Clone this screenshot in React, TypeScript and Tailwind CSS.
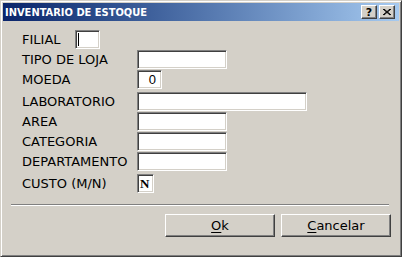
import React from "react";

const sunken =
  "bg-white border border-t-[#808080] border-l-[#808080] border-b-white border-r-white shadow-[inset_1px_1px_0_#404040,inset_-1px_-1px_0_#d4d0c8]";

function Field({ w, children, className = "" }: { w: string; children?: React.ReactNode; className?: string }) {
  return <div className={`${sunken} ${w} h-[19px] flex items-center ${className}`}>{children}</div>;
}

function Row({ label, mt, children }: { label: string; mt: string; children: React.ReactNode }) {
  return (
    <div className={`flex items-center h-[19px] ${mt}`}>
      <div className="w-[134px] shrink-0 pl-[19px] text-[13px] leading-none text-black">{label}</div>
      {children}
    </div>
  );
}

function Btn({ first, rest }: { first: string; rest: string }) {
  return (
    <div className="w-[110px] h-[23px] flex items-center justify-center bg-[#d4d0c8] border border-t-white border-l-white border-b-[#404040] border-r-[#404040] shadow-[inset_-1px_-1px_0_#808080] text-[13px] text-black">
      <span>
        <span className="underline underline-offset-2">{first}</span>
        {rest}
      </span>
    </div>
  );
}

export default function App() {
  return (
    <div
      className="w-[402px] h-[257px] bg-[#d4d0c8] flex flex-col p-[2px] border border-t-[#d4d0c8] border-l-[#d4d0c8] border-b-[#404040] border-r-[#404040] shadow-[inset_1px_1px_0_#ffffff,inset_-1px_-1px_0_#808080] overflow-hidden"
      style={{ fontFamily: '"DejaVu Sans", sans-serif' }}
    >
      <div className="h-[18px] shrink-0 flex items-center justify-between bg-gradient-to-r from-[#0a246a] to-[#a6caf0] pl-[2px] pr-[4px]">
        <span
          className="text-white text-[11px] font-bold leading-none"
          style={{ fontFamily: '"DejaVu Sans Condensed", "DejaVu Sans", sans-serif' }}
        >
          INVENTARIO DE ESTOQUE
        </span>
        <div className="flex gap-[2px]">
          <div className="w-[16px] h-[14px] bg-[#d4d0c8] border border-t-white border-l-white border-b-[#404040] border-r-[#404040] shadow-[inset_-1px_-1px_0_#808080] flex items-center justify-center text-[11px] font-bold leading-none text-black">?</div>
          <div className="w-[16px] h-[14px] bg-[#d4d0c8] border border-t-white border-l-white border-b-[#404040] border-r-[#404040] shadow-[inset_-1px_-1px_0_#808080] flex items-center justify-center">
            <svg width="8" height="7" viewBox="0 0 8 7">
              <path d="M0 0 L7 6 M1 0 L8 6 M7 0 L0 6 M8 0 L1 6" stroke="black" strokeWidth="1" />
            </svg>
          </div>
        </div>
      </div>

      <div className="flex flex-col">
        <div className="flex items-center h-[19px] mt-[9px]">
          <div className="pl-[19px] w-[72px] shrink-0 text-[13px] leading-none text-black">FILIAL</div>
          <Field w="w-[25px]">
            <div className="ml-[2px] w-px h-[13px] bg-black" />
          </Field>
        </div>
        <Row label="TIPO DE LOJA" mt="mt-[1px]">
          <Field w="w-[90px]" />
        </Row>
        <Row label="MOEDA" mt="mt-[1px]">
          <Field w="w-[25px]" className="justify-end pr-[5px]">
            <span className="text-[13px] leading-none" style={{ fontFamily: '"Liberation Sans", sans-serif' }}>0</span>
          </Field>
        </Row>
        <Row label="LABORATORIO" mt="mt-[3px]">
          <Field w="w-[170px]" />
        </Row>
        <Row label="AREA" mt="mt-[1px]">
          <Field w="w-[90px]" />
        </Row>
        <Row label="CATEGORIA" mt="mt-[1px]">
          <Field w="w-[90px]" />
        </Row>
        <Row label="DEPARTAMENTO" mt="mt-[1px]">
          <Field w="w-[90px]" />
        </Row>
        <Row label="CUSTO (M/N)" mt="mt-[3px]">
          <Field w="w-[17px]" className="pl-[2px]">
            <span className="text-[13px] font-bold leading-none" style={{ fontFamily: '"Liberation Serif", serif' }}>N</span>
          </Field>
        </Row>
      </div>

      <div className="mt-[11px] ml-[8px] mr-[10px] h-[2px] border-t border-t-[#808080] border-b border-b-white" />

      <div className="flex justify-end gap-[6px] mt-[8px] pr-[8px]">
        <Btn first="O" rest="k" />
        <Btn first="C" rest="ancelar" />
      </div>
    </div>
  );
}
